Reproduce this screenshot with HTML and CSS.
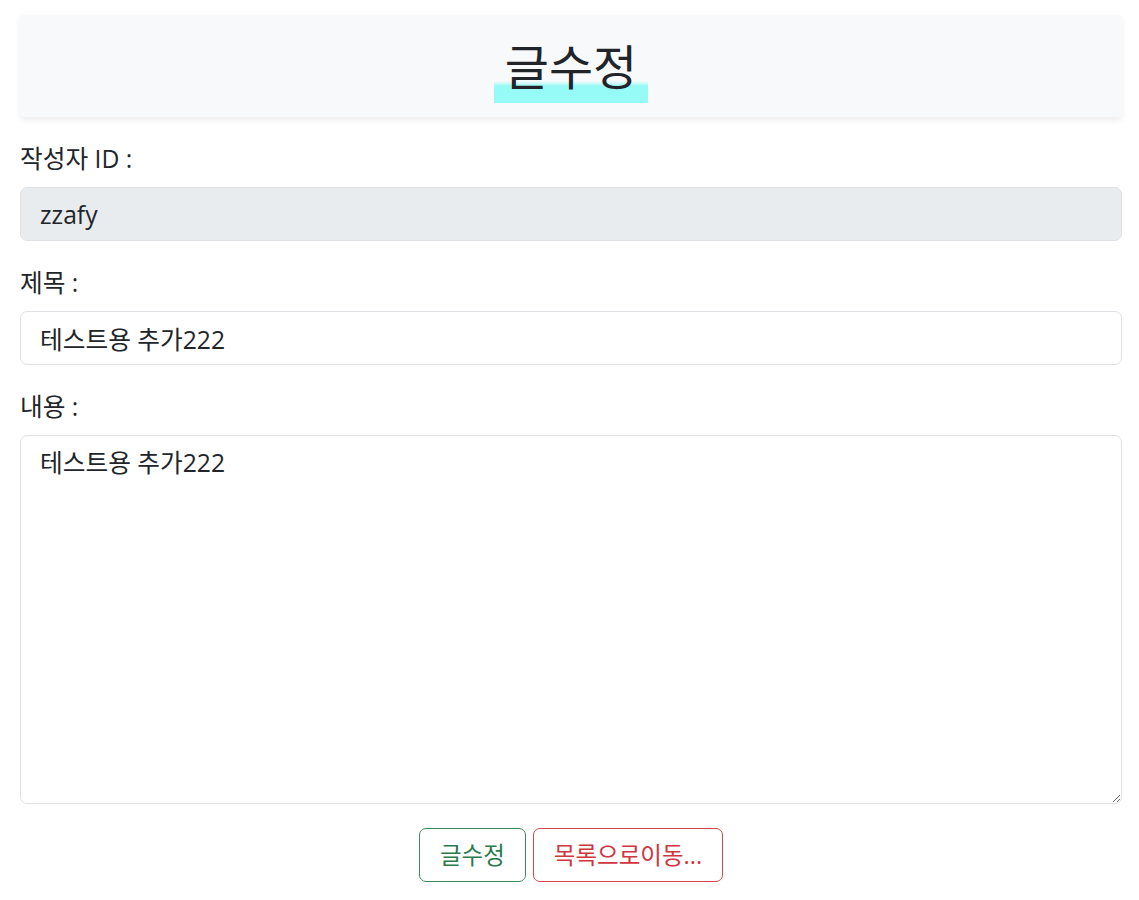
FILE: index.html
```html
<!DOCTYPE html>
<html lang="ko">
<head>
<meta charset="utf-8">
<title>글수정</title>
<link rel="stylesheet" href="styles.css">
</head>
<body>
<div class="page">
  <header class="title-box">
    <h1 class="title"><span class="mark">글수정</span></h1>
  </header>
  <form class="form">
    <label class="label" for="writer">작성자 ID :</label>
    <input class="control" id="writer" type="text" value="zzafy" disabled>
    <label class="label" for="subject">제목 :</label>
    <input class="control" id="subject" type="text" value="테스트용 추가222">
    <label class="label" for="content">내용 :</label>
    <textarea class="control area" id="content">테스트용 추가222</textarea>
    <div class="actions">
      <button type="button" class="btn btn-green">글수정</button>
      <button type="button" class="btn btn-red">목록으로이동...</button>
    </div>
  </form>
</div>
</body>
</html>
```
FILE: styles.css
```css
* { box-sizing: border-box; }
html, body { margin: 0; padding: 0; background: #fff; }
body {
  font-family: "Open Sans", "Noto Sans CJK KR", sans-serif;
  color: #212529;
  font-size: 24.7px;
  line-height: 33px;
}
.page {
  padding: 15px 17px 0 20px;
}
.title-box {
  background: #f8f9fa;
  box-shadow: 0 3px 6px rgba(0, 0, 0, 0.075);
  border-radius: 4px;
  height: 102px;
  padding-top: 34px;
  text-align: center;
}
.title {
  margin: 0;
  font-weight: 400;
  font-size: 48px;
  line-height: 35px;
}
.mark {
  display: inline-block;
  height: 54px;
  padding: 0 11px;
  background: linear-gradient(to bottom, rgba(150, 251, 246, 0) 0, rgba(150, 251, 246, 0) 32px, #96fbf6 37px, #96fbf6 100%);
}
.form {
  display: flex;
  flex-direction: column;
  padding-top: 25px;
}
.label {
  display: block;
  line-height: 33px;
  margin-bottom: 12px;
}
.control {
  display: block;
  width: 100%;
  height: 54px;
  margin: 0 0 25px 0;
  padding: 0 19px;
  font: inherit;
  line-height: 33px;
  color: #212529;
  background: #fff;
  border: 1px solid #dee2e6;
  border-radius: 7px;
  outline: none;
}
.control:disabled {
  background: #e9ecef;
  color: #212529;
  opacity: 1;
}
.area {
  height: 369px;
  padding: 10px 19px;
  resize: vertical;
  margin-bottom: 24px;
}
.actions {
  display: flex;
  justify-content: center;
  gap: 7px;
}
.btn {
  height: 54px;
  padding: 0 20px;
  font: inherit;
  font-size: 23.5px;
  background: #fff;
  border: 1px solid;
  border-radius: 7px;
  cursor: pointer;
}
.btn-green { color: #2b7a4b; border-color: #3f8a5c; }
.btn-red { color: #d0363f; border-color: #d9444e; }
```
